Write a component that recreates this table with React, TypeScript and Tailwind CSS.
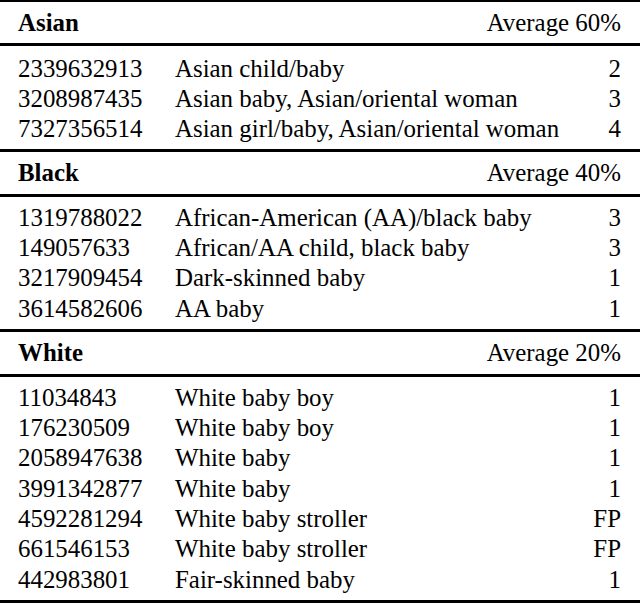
import React from "react";

type Row = [string, string, string];
type Section = { title: string; avg: string; rows: Row[]; headH: string; body: string };

const sections: Section[] = [
  {
    title: "Asian",
    avg: "Average 60%",
    headH: "h-[41px] pt-[2px]",
    body: "h-[103px] pt-[8px]",
    rows: [
      ["2339632913", "Asian child/baby", "2"],
      ["3208987435", "Asian baby, Asian/oriental woman", "3"],
      ["7327356514", "Asian girl/baby, Asian/oriental woman", "4"],
    ],
  },
  {
    title: "Black",
    avg: "Average 40%",
    headH: "h-[42px] pt-[1px]",
    body: "h-[132px] pt-[6px]",
    rows: [
      ["1319788022", "African-American (AA)/black baby", "3"],
      ["149057633", "African/AA child, black baby", "3"],
      ["3217909454", "Dark-skinned baby", "1"],
      ["3614582606", "AA baby", "1"],
    ],
  },
  {
    title: "White",
    avg: "Average 20%",
    headH: "h-[42px] pt-[1px]",
    body: "h-[223px] pt-[6px]",
    rows: [
      ["11034843", "White baby boy", "1"],
      ["176230509", "White baby boy", "1"],
      ["2058947638", "White baby", "1"],
      ["3991342877", "White baby", "1"],
      ["4592281294", "White baby stroller", "FP"],
      ["661546153", "White baby stroller", "FP"],
      ["442983801", "Fair-skinned baby", "1"],
    ],
  },
];

export default function App() {
  return (
    <div
      className="w-[640px] h-[604px] bg-white text-black text-[24.9px] overflow-hidden"
      style={{ fontFamily: '"Liberation Serif", "Times New Roman", serif' }}
    >
      <div className="h-[2px] bg-black" />
      {sections.map((s) => (
        <div key={s.title}>
          <div className={`${s.headH} flex items-center justify-between pl-[18px] pr-[19px] leading-none`}>
            <span className="font-bold">{s.title}</span>
            <span>{s.avg}</span>
          </div>
          <div className="h-[3px] bg-black" />
          <div className={s.body}>
            {s.rows.map((r, i) => (
              <div key={i} className="flex h-[30.33px] items-center pl-[18px] pr-[19px] leading-none">
                <span className="w-[157px]">{r[0]}</span>
                <span className="flex-1">{r[1]}</span>
                <span>{r[2]}</span>
              </div>
            ))}
          </div>
          <div className="h-[3px] bg-black" />
        </div>
      ))}
    </div>
  );
}
